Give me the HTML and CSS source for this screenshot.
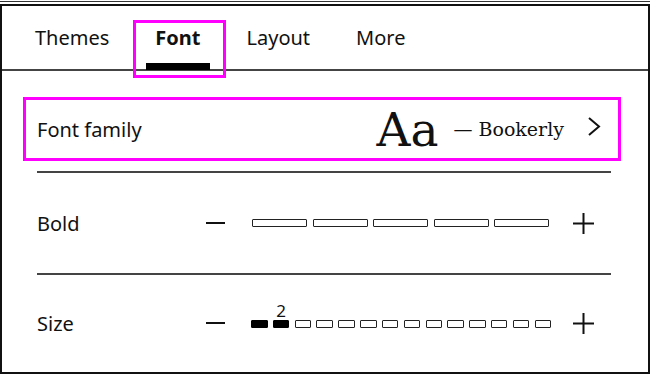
FILE: index.html
```html
<!DOCTYPE html>
<html lang="en">
<head>
<meta charset="utf-8">
<title>Font settings</title>
<link rel="stylesheet" href="styles.css">
</head>
<body>
<div class="topstrip"><div class="toprule"></div></div>
<div class="panel">
  <nav class="tabs">
    <div class="tab">Themes</div>
    <div class="tab active">Font<span class="hl"></span></div>
    <div class="tab">Layout</div>
    <div class="tab">More</div>
  </nav>
  <div class="content">
    <div class="family">
      <span class="label">Font family</span>
      <span class="aa">Aa</span>
      <span class="dash">—</span>
      <span class="fname">Bookerly</span>
      <svg class="chev" width="14" height="21" viewBox="0 0 14 21"><path d="M2 2 L12 10.5 L2 19" fill="none" stroke="#111" stroke-width="2"/></svg>
    </div>
    <div class="divider first"></div>
    <div class="slider">
      <span class="label">Bold</span>
      <svg class="minus" width="19" height="21" viewBox="0 0 19 21"><path d="M0 10 H19" stroke="#111" stroke-width="2"/></svg>
      <div class="bars bold-bars">
        <span class="seg"></span><span class="seg"></span><span class="seg"></span><span class="seg"></span><span class="seg"></span>
      </div>
      <svg class="plus" width="21" height="21" viewBox="0 0 21 21"><path d="M0 10.5 H21 M10.5 0 V21" stroke="#111" stroke-width="2"/></svg>
    </div>
    <div class="divider"></div>
    <div class="slider size">
      <span class="label">Size</span>
      <svg class="minus" width="19" height="21" viewBox="0 0 19 21"><path d="M0 10 H19" stroke="#111" stroke-width="2"/></svg>
      <div class="bars size-bars">
        <span class="seg filled"></span><span class="seg filled current"><span class="seg-label">2</span></span><span class="seg"></span><span class="seg"></span><span class="seg"></span><span class="seg"></span><span class="seg"></span><span class="seg"></span><span class="seg"></span><span class="seg"></span><span class="seg"></span><span class="seg"></span><span class="seg"></span><span class="seg"></span>
      </div>
      <svg class="plus" width="21" height="21" viewBox="0 0 21 21"><path d="M0 10.5 H21 M10.5 0 V21" stroke="#111" stroke-width="2"/></svg>
    </div>
  </div>
</div>
</body>
</html>
```
FILE: styles.css
```css
body {
  margin: 0;
  background: #fff;
  color: #111;
  font-family: "Noto Sans", sans-serif;
}

.topstrip {
  height: 4px;
  padding-top: 1px;
  box-sizing: border-box;
}

.toprule {
  border-top: 1px solid #333;
}

.panel {
  width: 650px;
  height: 370px;
  box-sizing: border-box;
  border: 2px solid #111;
  overflow: hidden;
}

.tabs {
  display: flex;
  gap: 46px;
  height: 63px;
  padding-left: 33px;
  border-bottom: 2px solid #444;
  font-size: 20px;
}

.tab {
  position: relative;
  display: flex;
  align-items: center;
}

.tab.active {
  font-weight: 700;
}

.tab.active::after {
  content: "";
  position: absolute;
  left: -9px;
  right: -9px;
  bottom: -1px;
  height: 7px;
  background: #000;
}

.hl {
  position: absolute;
  left: -22px;
  right: -25px;
  top: 14px;
  bottom: -9px;
  border: 3px solid #f0f;
}

.content {
  padding: 26px 37px 0 35px;
}

.label {
  font-size: 20px;
}

.family {
  display: flex;
  align-items: center;
  height: 58px;
  margin: 0 -10px 0 -14px;
  padding: 0 17px 0 11px;
  border: 3px solid #f0f;
}

.family .label {
  flex: 1;
}

.aa {
  font-family: "DejaVu Serif", serif;
  font-size: 47px;
  line-height: 1;
}

.dash,
.fname {
  font-family: "DejaVu Serif", serif;
  font-size: 19px;
}

.dash {
  margin: 0 6px 0 15px;
}

.chev {
  margin-left: 23px;
  margin-bottom: 5px;
}

.divider {
  height: 2px;
  background: #444;
}

.divider.first {
  margin-top: 10px;
}

.slider {
  display: flex;
  align-items: center;
  height: 100px;
}

.slider.size {
  height: 97px;
}

.slider .label {
  flex: none;
  width: 169px;
}

.bars {
  display: flex;
}

.bold-bars {
  width: 297px;
  gap: 5.5px;
  margin-left: 27px;
}

.size-bars {
  width: 300px;
  gap: 5.3px;
  margin-left: 26px;
}

.seg {
  flex: 1;
  height: 8px;
  box-sizing: border-box;
  border: 1.5px solid #222;
  border-radius: 1px;
}

.seg.filled {
  background: #000;
  border-color: #000;
}

.current {
  position: relative;
}

.seg-label {
  position: absolute;
  left: 50%;
  bottom: calc(100% + 2px);
  transform: translateX(-50%);
  font-size: 17px;
  line-height: 1;
}

.bold-bars + .plus {
  margin-left: 24px;
}

.size-bars + .plus {
  margin-left: 22px;
}
```
